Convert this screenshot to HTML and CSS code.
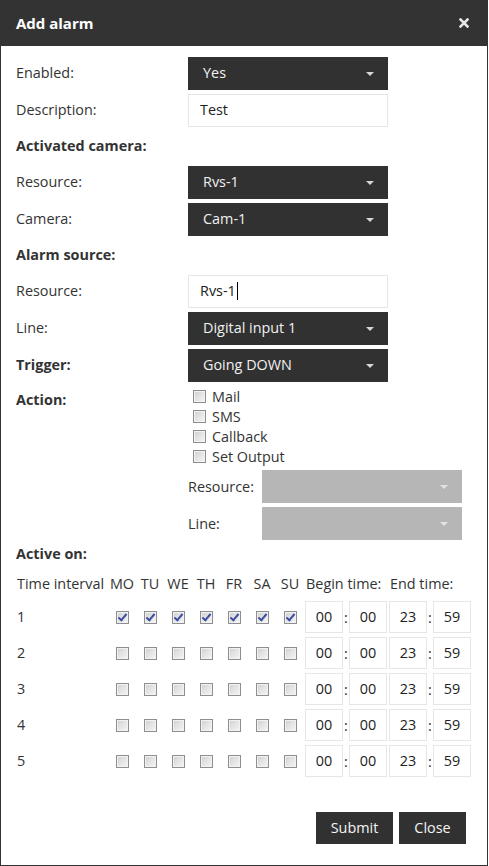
FILE: index.html
```html
<!DOCTYPE html>
<html>
<head>
<meta charset="utf-8">
<link rel="stylesheet" href="styles.css">
</head>
<body>
<div class="dialog">
  <header class="titlebar">
    <h1 class="title">Add alarm</h1>
    <span class="close-x"><svg width="10" height="10" viewBox="0 0 10 10"><path d="M1.5 1.5 L8.5 8.5 M8.5 1.5 L1.5 8.5" stroke="#e6e6e6" stroke-width="2.6" stroke-linecap="square"/></svg></span>
  </header>
  <div class="body">
    <div class="form">
      <div class="row"><span class="label">Enabled:</span><div class="select">Yes<i class="caret"></i></div></div>
      <div class="row"><span class="label">Description:</span><div class="input">Test</div></div>
      <div class="heading">Activated camera:</div>
      <div class="row"><span class="label">Resource:</span><div class="select">Rvs-1<i class="caret"></i></div></div>
      <div class="row"><span class="label">Camera:</span><div class="select">Cam-1<i class="caret"></i></div></div>
      <div class="heading">Alarm source:</div>
      <div class="row"><span class="label">Resource:</span><div class="input">Rvs-1<span class="cursor"></span></div></div>
      <div class="row"><span class="label">Line:</span><div class="select">Digital input 1<i class="caret"></i></div></div>
      <div class="row"><span class="label bold">Trigger:</span><div class="select">Going DOWN<i class="caret"></i></div></div>
      <div class="action">
        <span class="label bold action-label">Action:</span>
        <div class="action-controls">
          <div class="checklist">
            <label class="check-item"><span class="cb"></span>Mail</label>
            <label class="check-item"><span class="cb"></span>SMS</label>
            <label class="check-item"><span class="cb"></span>Callback</label>
            <label class="check-item"><span class="cb"></span>Set Output</label>
          </div>
          <div class="subrow"><span class="sublabel">Resource:</span><div class="select disabled"><i class="caret"></i></div></div>
          <div class="subrow"><span class="sublabel">Line:</span><div class="select disabled"><i class="caret"></i></div></div>
        </div>
      </div>
    </div>
    <div class="active-heading">Active on:</div>
    <div class="schedule">
      <div class="th first">Time interval</div>
      <div class="th c">MO</div><div class="th c">TU</div><div class="th c">WE</div><div class="th c">TH</div><div class="th c">FR</div><div class="th c">SA</div><div class="th c">SU</div>
      <div class="th">Begin time:</div><div class="th">End time:</div>

      <div class="td first">1</div>
      <div class="td c"><span class="cb checked"></span></div><div class="td c"><span class="cb checked"></span></div><div class="td c"><span class="cb checked"></span></div><div class="td c"><span class="cb checked"></span></div><div class="td c"><span class="cb checked"></span></div><div class="td c"><span class="cb checked"></span></div><div class="td c"><span class="cb checked"></span></div>
      <div class="td time"><span class="tbox">00</span><span class="colon">:</span><span class="tbox">00</span></div>
      <div class="td time"><span class="tbox">23</span><span class="colon">:</span><span class="tbox">59</span></div>

      <div class="td first">2</div>
      <div class="td c"><span class="cb"></span></div><div class="td c"><span class="cb"></span></div><div class="td c"><span class="cb"></span></div><div class="td c"><span class="cb"></span></div><div class="td c"><span class="cb"></span></div><div class="td c"><span class="cb"></span></div><div class="td c"><span class="cb"></span></div>
      <div class="td time"><span class="tbox">00</span><span class="colon">:</span><span class="tbox">00</span></div>
      <div class="td time"><span class="tbox">23</span><span class="colon">:</span><span class="tbox">59</span></div>

      <div class="td first">3</div>
      <div class="td c"><span class="cb"></span></div><div class="td c"><span class="cb"></span></div><div class="td c"><span class="cb"></span></div><div class="td c"><span class="cb"></span></div><div class="td c"><span class="cb"></span></div><div class="td c"><span class="cb"></span></div><div class="td c"><span class="cb"></span></div>
      <div class="td time"><span class="tbox">00</span><span class="colon">:</span><span class="tbox">00</span></div>
      <div class="td time"><span class="tbox">23</span><span class="colon">:</span><span class="tbox">59</span></div>

      <div class="td first">4</div>
      <div class="td c"><span class="cb"></span></div><div class="td c"><span class="cb"></span></div><div class="td c"><span class="cb"></span></div><div class="td c"><span class="cb"></span></div><div class="td c"><span class="cb"></span></div><div class="td c"><span class="cb"></span></div><div class="td c"><span class="cb"></span></div>
      <div class="td time"><span class="tbox">00</span><span class="colon">:</span><span class="tbox">00</span></div>
      <div class="td time"><span class="tbox">23</span><span class="colon">:</span><span class="tbox">59</span></div>

      <div class="td first">5</div>
      <div class="td c"><span class="cb"></span></div><div class="td c"><span class="cb"></span></div><div class="td c"><span class="cb"></span></div><div class="td c"><span class="cb"></span></div><div class="td c"><span class="cb"></span></div><div class="td c"><span class="cb"></span></div><div class="td c"><span class="cb"></span></div>
      <div class="td time"><span class="tbox">00</span><span class="colon">:</span><span class="tbox">00</span></div>
      <div class="td time"><span class="tbox">23</span><span class="colon">:</span><span class="tbox">59</span></div>
    </div>
    <div class="buttons">
      <button class="btn submit">Submit</button>
      <button class="btn close">Close</button>
    </div>
  </div>
</div>
</body>
</html>
```
FILE: styles.css
```css
* { box-sizing: border-box; }
html, body { margin: 0; padding: 0; background: #fff; }
body {
  font-family: "Open Sans", "Noto Sans", sans-serif;
  font-size: 14.4px;
  color: #333;
}
.dialog {
  width: 488px;
  height: 866px;
  border: 1px solid #333;
  border-top: none;
  display: flex;
  flex-direction: column;
}
.titlebar {
  height: 46px;
  background: #333;
  margin: 0 -1px;
  display: flex;
  align-items: center;
  justify-content: space-between;
  padding: 0 19px 0 16px;
}
.title {
  margin: 0;
  font-size: 15px;
  font-weight: 700;
  color: #fff;
  line-height: 20px;
}
.close-x { display: flex; width: 10px; height: 10px; }
.body {
  padding: 11px 15px 0 15px;
  display: flex;
  flex-direction: column;
}
.form {
  display: flex;
  flex-direction: column;
  gap: 4px;
}
.row {
  display: grid;
  grid-template-columns: 172px 200px;
  align-items: center;
  height: 33px;
}
.label { line-height: 20px; margin-top: -2px; }
.bold { font-weight: 700; }
.heading {
  height: 31px;
  line-height: 29px;
  font-weight: 700;
}
.select {
  position: relative;
  height: 33px;
  background: #313131;
  color: #f0f0f0;
  padding: 0 15px;
  line-height: 31px;
  width: 200px;
}
.select.disabled { background: #b6b6b6; }
.caret {
  position: absolute;
  right: 14px;
  top: 15px;
  width: 0;
  height: 0;
  border-left: 4px solid transparent;
  border-right: 4px solid transparent;
  border-top: 4px solid #d6d6d6;
}
.select.disabled .caret { border-top-color: #e2e2e2; }
.input {
  height: 33px;
  border: 1px solid #e6e6e6;
  background: #fff;
  padding: 0 11px 2px;
  color: #222;
  display: flex;
  align-items: center;
  width: 200px;
}
.cursor {
  display: inline-block;
  width: 1px;
  height: 18px;
  background: #000;
  margin-left: 1px;
}
.action {
  display: grid;
  grid-template-columns: 172px 274px;
}
.action-label { padding-top: 6px; }
.action-controls { display: flex; flex-direction: column; gap: 4px; }
.checklist { display: flex; flex-direction: column; }
.check-item {
  height: 20px;
  display: flex;
  align-items: center;
  gap: 6px;
  padding-left: 5px;
}
.cb {
  display: inline-block;
  width: 13px;
  height: 13px;
  border: 1px solid #8e8e8e;
  background: linear-gradient(135deg, #cfcfcf 0%, #e6e6e6 55%, #f6f6f6 100%);
  box-shadow: inset 0 0 0 1px #f2f2f2;
  flex: none;
  position: relative;
}
.cb.checked::after {
  content: "";
  position: absolute;
  left: 3px;
  top: 0px;
  width: 3px;
  height: 7px;
  border-right: 2px solid #3d4fa5;
  border-bottom: 2px solid #3d4fa5;
  transform: rotate(40deg);
}
.subrow {
  display: grid;
  grid-template-columns: 74px 200px;
  align-items: center;
  height: 33px;
}
.active-heading {
  margin-top: 4px;
  height: 20px;
  line-height: 20px;
  font-weight: 700;
}
.schedule {
  margin-top: 6px;
  display: grid;
  grid-template-columns: 92px repeat(7, 28px) 84px 84px;
  grid-template-rows: 27px repeat(5, 32px);
  row-gap: 4px;
  width: 456px;
}
.th {
  display: flex;
  align-items: center;
  padding-left: 2px;
  white-space: nowrap;
}
.th.first, .td.first { padding-left: 1px; }
.th.c { justify-content: center; padding-left: 0; }
.td { display: flex; align-items: center; }
.td.first { padding-bottom: 2px; }
.td.c { justify-content: center; }
.td.time { padding-left: 1px; }
.tbox {
  width: 38px;
  height: 32px;
  border: 1px solid #e6e6e6;
  display: flex;
  align-items: center;
  justify-content: center;
  padding-bottom: 1px;
  color: #222;
}
.colon {
  width: 6px;
  text-align: center;
  color: #333;
}
.buttons {
  margin-top: 35px;
  display: flex;
  justify-content: flex-end;
  gap: 6px;
  padding-right: 6px;
}
.btn {
  height: 32px;
  background: #313131;
  color: #f4f4f4;
  border: none;
  font-family: "Open Sans", "Noto Sans", sans-serif;
  font-size: 14.4px;
  padding: 0 0 2px;
}
.submit { width: 77px; }
.close { width: 67px; }
```
